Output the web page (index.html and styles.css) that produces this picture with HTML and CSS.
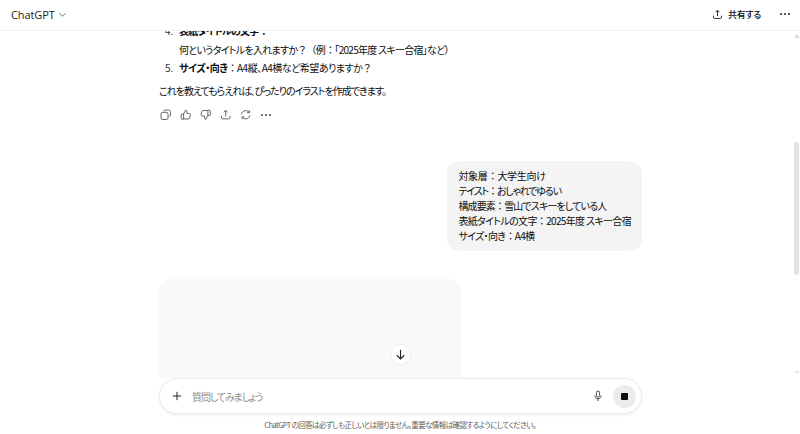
FILE: index.html
```html
<!DOCTYPE html>
<html lang="ja">
<head>
<meta charset="utf-8">
<title>ChatGPT</title>
<link rel="stylesheet" href="styles.css">
</head>
<body>
<div class="app">
  <header class="topbar">
    <div class="model">ChatGPT
      <svg class="chev" viewBox="0 0 10 10"><path d="M1.5 3.5 5 7l3.5-3.5"/></svg>
    </div>
    <div class="top-actions">
      <div class="share">
        <svg class="ico" viewBox="0 0 14 14"><path d="M7 9V1.8M4.6 4 7 1.6 9.4 4M1.8 8.5v1.8c0 1 .7 1.7 1.7 1.7h7c1 0 1.7-.7 1.7-1.7V8.5"/></svg>
        <span>共有する</span>
      </div>
      <div class="dots"><i></i><i></i><i></i></div>
    </div>
  </header>
  <main class="chat">
    <div class="thread">
      <ol class="list" start="4">
        <li class="item"><span class="num">4.</span><div class="tight-long"><b>表紙タイトルの文字<span class="fw">：</span></b><br>何というタイトルを入れますか<span class="fw">？（</span>例<span class="fw">：</span>「2025年度 スキー合宿」など）</div></li>
        <li class="item"><span class="num">5.</span><div class="tight-short"><b>サイズ・向き</b><span class="fw">：</span>A4縦、A4横など希望ありますか<span class="fw">？</span></div></li>
      </ol>
      <p class="para">これを教えてもらえれば、ぴったりのイラストを作成できます。</p>
      <div class="actions">
        <svg class="act" viewBox="0 0 14 14"><rect x="1.2" y="4" width="8.6" height="8.8" rx="2.4"/><path d="M4.4 2.6c.3-.9 1-1.4 2-1.4h3.6c1.6 0 2.8 1.2 2.8 2.8v3.4c0 1-.5 1.7-1.3 2"/></svg>
        <svg class="act" viewBox="0 0 14 14"><path d="M4.4 6.2 6.8 1.4c1 0 1.7.8 1.7 1.8v2.2h2.7c1 0 1.6.9 1.4 1.8l-.8 3.6c-.2.8-.8 1.4-1.7 1.4H4.4zM4.4 6.2H2.6c-.7 0-1.2.5-1.2 1.2v3.9c0 .7.5 1.2 1.2 1.2h1.8"/></svg>
        <svg class="act" viewBox="0 0 14 14"><path d="M9.6 7.8 7.2 12.6c-1 0-1.7-.8-1.7-1.8V8.6H2.8c-1 0-1.6-.9-1.4-1.8l.8-3.6c.2-.8.8-1.4 1.7-1.4h5.7zM9.6 7.8h1.8c.7 0 1.2-.5 1.2-1.2V2.7c0-.7-.5-1.2-1.2-1.2H9.6"/></svg>
        <svg class="act" viewBox="0 0 14 14"><path d="M7 9V1.8M4.6 4 7 1.6 9.4 4M1.8 8.5v1.8c0 1 .7 1.7 1.7 1.7h7c1 0 1.7-.7 1.7-1.7V8.5"/></svg>
        <svg class="act" viewBox="0 0 14 14"><path d="M2 6.2C2.4 3.6 4.5 2 7 2c1.8 0 3.2.8 4.2 2.2M11.4 1.6v2.8H8.6M12 7.8c-.4 2.6-2.5 4.2-5 4.2-1.8 0-3.2-.8-4.2-2.2M2.6 12.4V9.6h2.8"/></svg>
        <div class="dots small"><i></i><i></i><i></i></div>
      </div>
      <div class="bubble-row">
        <div class="bubble">
          <div class="tight-0">対象層<span class="fw">：</span>大学生向け</div>
          <div class="tight-3">テイスト<span class="fw">：</span>おしゃれでゆるい</div>
          <div class="tight-2">構成要素<span class="fw">：</span>雪山でスキーをしている人</div>
          <div class="tight-1">表紙タイトルの文字<span class="fw">：</span>2025年度 スキー合宿</div>
          <div class="tight-1">サイズ・向き<span class="fw">：</span>A4横</div>
        </div>
      </div>
      <div class="image-card"></div>
    </div>
    <button class="scroll-down" type="button" aria-label="下へスクロール">
      <svg viewBox="0 0 14 14"><path d="M7 2v9.6M3 7.8l4 4 4-4"/></svg>
    </button>
    <div class="scrollbar"><span class="arrow up"></span><span class="thumb"></span><span class="arrow down"></span></div>
  </main>
  <section class="composer-wrap">
    <div class="composer">
      <svg class="plus" viewBox="0 0 12 12"><path d="M6 1v10M1 6h10"/></svg>
      <span class="placeholder">質問してみましょう</span>
      <svg class="mic" viewBox="0 0 14 16"><rect x="4.8" y="1" width="4.4" height="8.6" rx="2.2"/><path d="M2.6 7.2c0 2.8 1.8 4.6 4.4 4.6s4.4-1.8 4.4-4.6M7 11.8V15"/></svg>
      <div class="stop"><span></span></div>
    </div>
    <p class="disclaimer">ChatGPT の回答は必ずしも正しいとは限りません。重要な情報は確認するようにしてください。</p>
  </section>
</div>
</body>
</html>
```
FILE: styles.css
```css
* { box-sizing: border-box; }
html, body { margin: 0; height: 100%; background: #fff; }
body {
  font-family: "Noto Sans CJK JP", "Open Sans", sans-serif;
  font-size: 10px;
  font-feature-settings: "palt";
  color: #0d0d0d;
  overflow: hidden;
}
.fw { font-feature-settings: normal; }
.tight-0 { letter-spacing: -.25px; }
.tight-1 { letter-spacing: -.65px; }
.tight-2 { letter-spacing: -.85px; }
.tight-3 { letter-spacing: -1.15px; }
.tight-long { letter-spacing: -.72px; }
.tight-short { letter-spacing: -.5px; }
.app { display: flex; flex-direction: column; height: 434px; }
.topbar {
  height: 31px;
  flex: none;
  display: flex;
  align-items: center;
  justify-content: space-between;
  padding: 0 10px 2px 11px;
  border-bottom: 1px solid #f2f2f2;
  position: relative;
  z-index: 2;
  background: #fff;
}
.model {
  display: flex;
  align-items: center;
  gap: 3px;
  font-family: "Open Sans", sans-serif;
  font-size: 11px;
  letter-spacing: -.1px;
  color: #1a1a1a;
}
.chev { width: 9px; height: 9px; fill: none; stroke: #666; stroke-width: 1; }
.top-actions { display: flex; align-items: center; gap: 19px; }
.share { display: flex; align-items: center; gap: 5px; font-size: 9px; font-weight: 500; letter-spacing: -.3px; }
.ico { width: 11px; height: 11px; fill: none; stroke: #222; stroke-width: 1.2; }
.dots { display: flex; gap: 2px; }
.dots i { width: 2px; height: 2px; border-radius: 50%; background: #222; }
.chat { flex: 1; min-height: 0; position: relative; overflow: hidden; }
.thread { width: 484px; margin: -9px 0 0 158px; }
.list { list-style: none; margin: 0; padding: 0; line-height: 18.5px; }
.item { display: flex; }
.num { width: 21px; padding-left: 7px; flex: none; color: #333; }
.item b { font-weight: 700; }
.para { margin: 4px 0 0 1px; line-height: 18.5px; letter-spacing: -1px; }
.actions { display: flex; align-items: center; gap: 8.5px; margin-top: 8px; height: 14px; padding-left: 2px; }
.act { width: 11.5px; height: 11.5px; fill: none; stroke: #444; stroke-width: 1; flex: none; }
.dots.small { margin-left: 1px; }
.dots.small i { background: #444; }
.bubble-row { display: flex; justify-content: flex-end; margin-top: 39px; }
.bubble {
  background: #f4f4f4;
  border-radius: 12px;
  padding: 7px 11px;
  line-height: 15.1px;
  height: 90px;
}
.image-card { width: 302px; height: 240px; margin-top: 28px; background: #f9f9f9; border-radius: 12px; margin-left: 1px; }
.scroll-down {
  position: absolute;
  left: 390px;
  top: 313px;
  width: 21px;
  height: 21px;
  padding: 3px;
  border-radius: 50%;
  border: 1px solid #ececec;
  background: #fff;
  display: flex;
}
.scroll-down svg { width: 100%; height: 100%; fill: none; stroke: #222; stroke-width: 1.2; }
.scrollbar {
  position: absolute;
  right: 0;
  top: 0;
  bottom: 0;
  width: 7px;
}
.thumb { position: absolute; left: 1px; top: 111px; width: 5px; height: 133px; border-radius: 3px; background: #e3e3e3; }
.arrow { position: absolute; left: 1px; width: 0; height: 0; border: 3px solid transparent; }
.arrow.up { top: 0; border-bottom: 4px solid #ddd; }
.arrow.down { bottom: 0; border-top: 4px solid #eee; }
.composer-wrap { flex: none; height: 56px; background: #fff; position: relative; }
.composer {
  width: 483px;
  height: 36px;
  margin-left: 159px;
  display: flex;
  align-items: center;
  padding: 0 5px 0 12px;
  border: 1px solid #ececec;
  border-radius: 18px;
  background: #fff;
  box-shadow: 0 1px 3px rgba(0,0,0,.08);
}
.plus { width: 10px; height: 10px; fill: none; stroke: #222; stroke-width: 1.2; flex: none; }
.placeholder { flex: 1; margin-left: 10px; color: #8f8f8f; letter-spacing: -1.1px; }
.mic { width: 10px; height: 12px; fill: none; stroke: #222; stroke-width: 1.1; flex: none; margin-right: 10px; }
.stop { width: 23px; height: 23px; border-radius: 50%; background: #ececec; display: flex; align-items: center; justify-content: center; flex: none; }
.stop span { width: 7px; height: 7px; background: #0d0d0d; border-radius: 1px; }
.disclaimer { margin: 5px 0 0; text-align: center; font-size: 7.5px; line-height: 12px; color: #5d5d5d; letter-spacing: -.6px; }
```
